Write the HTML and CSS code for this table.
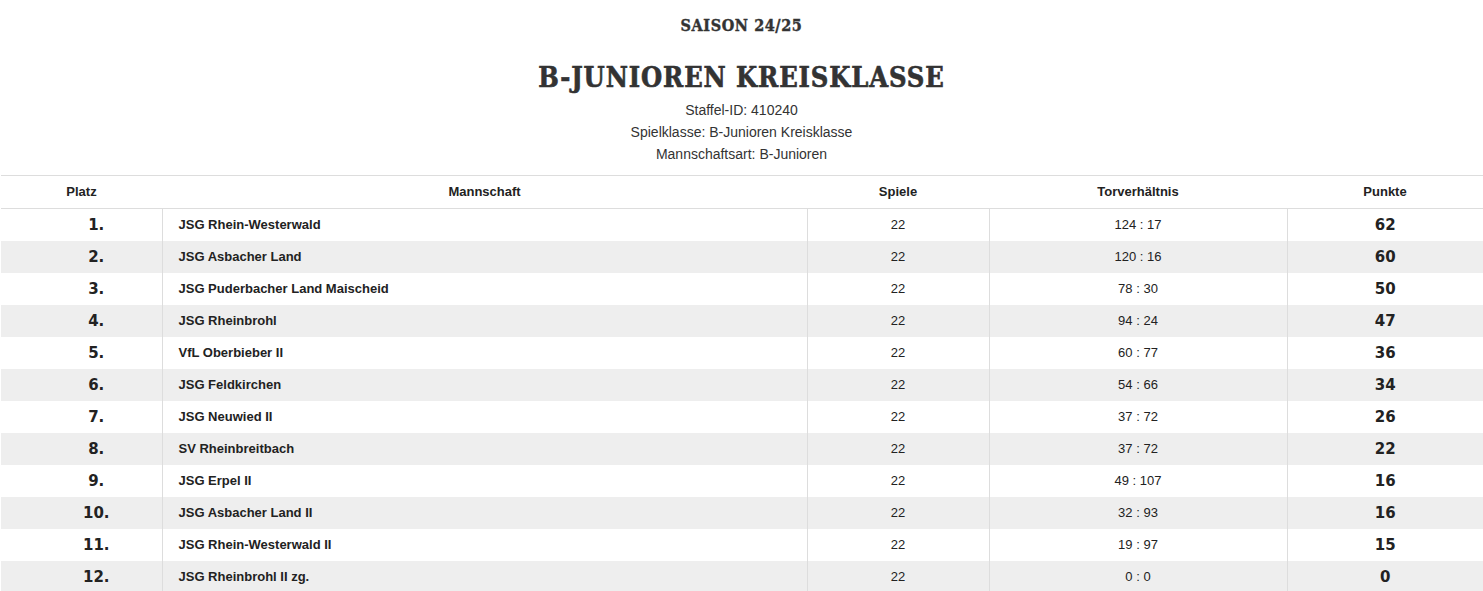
FILE: index.html
```html
<!DOCTYPE html>
<html lang="de">
<head>
<meta charset="utf-8">
<title>B-Junioren Kreisklasse</title>
<link rel="stylesheet" href="styles.css">
</head>
<body>
<header class="head">
  <div class="season">SAISON 24/25</div>
  <h1 class="title">B-JUNIOREN KREISKLASSE</h1>
  <div class="info">
    <div>Staffel-ID: 410240</div>
    <div>Spielklasse: B-Junioren Kreisklasse</div>
    <div>Mannschaftsart: B-Junioren</div>
  </div>
</header>
<table class="standings">
  <colgroup>
    <col class="c-rank"><col class="c-team"><col class="c-games"><col class="c-goals"><col class="c-pts">
  </colgroup>
  <thead>
    <tr><th>Platz</th><th>Mannschaft</th><th>Spiele</th><th>Torverhältnis</th><th>Punkte</th></tr>
  </thead>
  <tbody>
    <tr><td class="rank">1.</td><td class="team">JSG Rhein-Westerwald</td><td>22</td><td>124 : 17</td><td class="pts">62</td></tr>
    <tr><td class="rank">2.</td><td class="team">JSG Asbacher Land</td><td>22</td><td>120 : 16</td><td class="pts">60</td></tr>
    <tr><td class="rank">3.</td><td class="team">JSG Puderbacher Land Maischeid</td><td>22</td><td>78 : 30</td><td class="pts">50</td></tr>
    <tr><td class="rank">4.</td><td class="team">JSG Rheinbrohl</td><td>22</td><td>94 : 24</td><td class="pts">47</td></tr>
    <tr><td class="rank">5.</td><td class="team">VfL Oberbieber II</td><td>22</td><td>60 : 77</td><td class="pts">36</td></tr>
    <tr><td class="rank">6.</td><td class="team">JSG Feldkirchen</td><td>22</td><td>54 : 66</td><td class="pts">34</td></tr>
    <tr><td class="rank">7.</td><td class="team">JSG Neuwied II</td><td>22</td><td>37 : 72</td><td class="pts">26</td></tr>
    <tr><td class="rank">8.</td><td class="team">SV Rheinbreitbach</td><td>22</td><td>37 : 72</td><td class="pts">22</td></tr>
    <tr><td class="rank">9.</td><td class="team">JSG Erpel II</td><td>22</td><td>49 : 107</td><td class="pts">16</td></tr>
    <tr><td class="rank">10.</td><td class="team">JSG Asbacher Land II</td><td>22</td><td>32 : 93</td><td class="pts">16</td></tr>
    <tr><td class="rank">11.</td><td class="team">JSG Rhein-Westerwald II</td><td>22</td><td>19 : 97</td><td class="pts">15</td></tr>
    <tr><td class="rank">12.</td><td class="team">JSG Rheinbrohl II zg.</td><td>22</td><td>0 : 0</td><td class="pts">0</td></tr>
  </tbody>
</table>
</body>
</html>
```

FILE: styles.css
```css
html, body {
  margin: 0;
  padding: 0;
  background: #fff;
}
body {
  font-family: "Liberation Sans", Arial, sans-serif;
  color: #333;
  font-size: 14px;
}
.head {
  text-align: center;
  padding-top: 16px;
}
.season {
  font-family: "DejaVu Serif Condensed", "DejaVu Serif", serif;
  font-stretch: condensed;
  font-weight: bold;
  font-size: 16px;
  line-height: 20px;
  color: #333;
  letter-spacing: 0.6px;
  -webkit-text-stroke: 0.4px #333;
}
.title {
  font-family: "DejaVu Serif Condensed", "DejaVu Serif", serif;
  font-stretch: condensed;
  font-weight: bold;
  font-size: 27px;
  line-height: 36px;
  margin: 24px 0 3px;
  color: #333;
  letter-spacing: 0.9px;
  -webkit-text-stroke: 0.6px #333;
}
.info {
  font-size: 14px;
  line-height: 22px;
  color: #333;
}
.standings {
  margin: 10px 0 0 1px;
  width: 1482px;
  border-collapse: collapse;
  table-layout: fixed;
}
.c-rank { width: 161px; }
.c-team { width: 645px; }
.c-games { width: 182px; }
.c-goals { width: 298px; }
.c-pts { width: 196px; }
.standings th {
  font-size: 13px;
  font-weight: bold;
  color: #222;
  height: 31px;
  padding: 0 0 1px;
  text-align: center;
  border-top: 1px solid #ddd;
  border-bottom: 1px solid #ddd;
}
.standings td {
  height: 31px;
  padding: 0 0 1px;
  text-align: center;
  font-size: 13px;
  color: #222;
  border-left: 1px solid #ddd;
}
.standings td:first-child {
  border-left: none;
}
.standings tbody tr:nth-child(even) {
  background: #eee;
}
.standings td.team {
  text-align: left;
  padding-left: 16px;
  font-weight: bold;
}
.standings td.rank,
.standings td.pts {
  font-family: "DejaVu Sans", sans-serif;
  font-weight: bold;
  font-size: 15px;
  color: #222;
}
.standings td.rank {
  padding-left: 30px;
}
```
